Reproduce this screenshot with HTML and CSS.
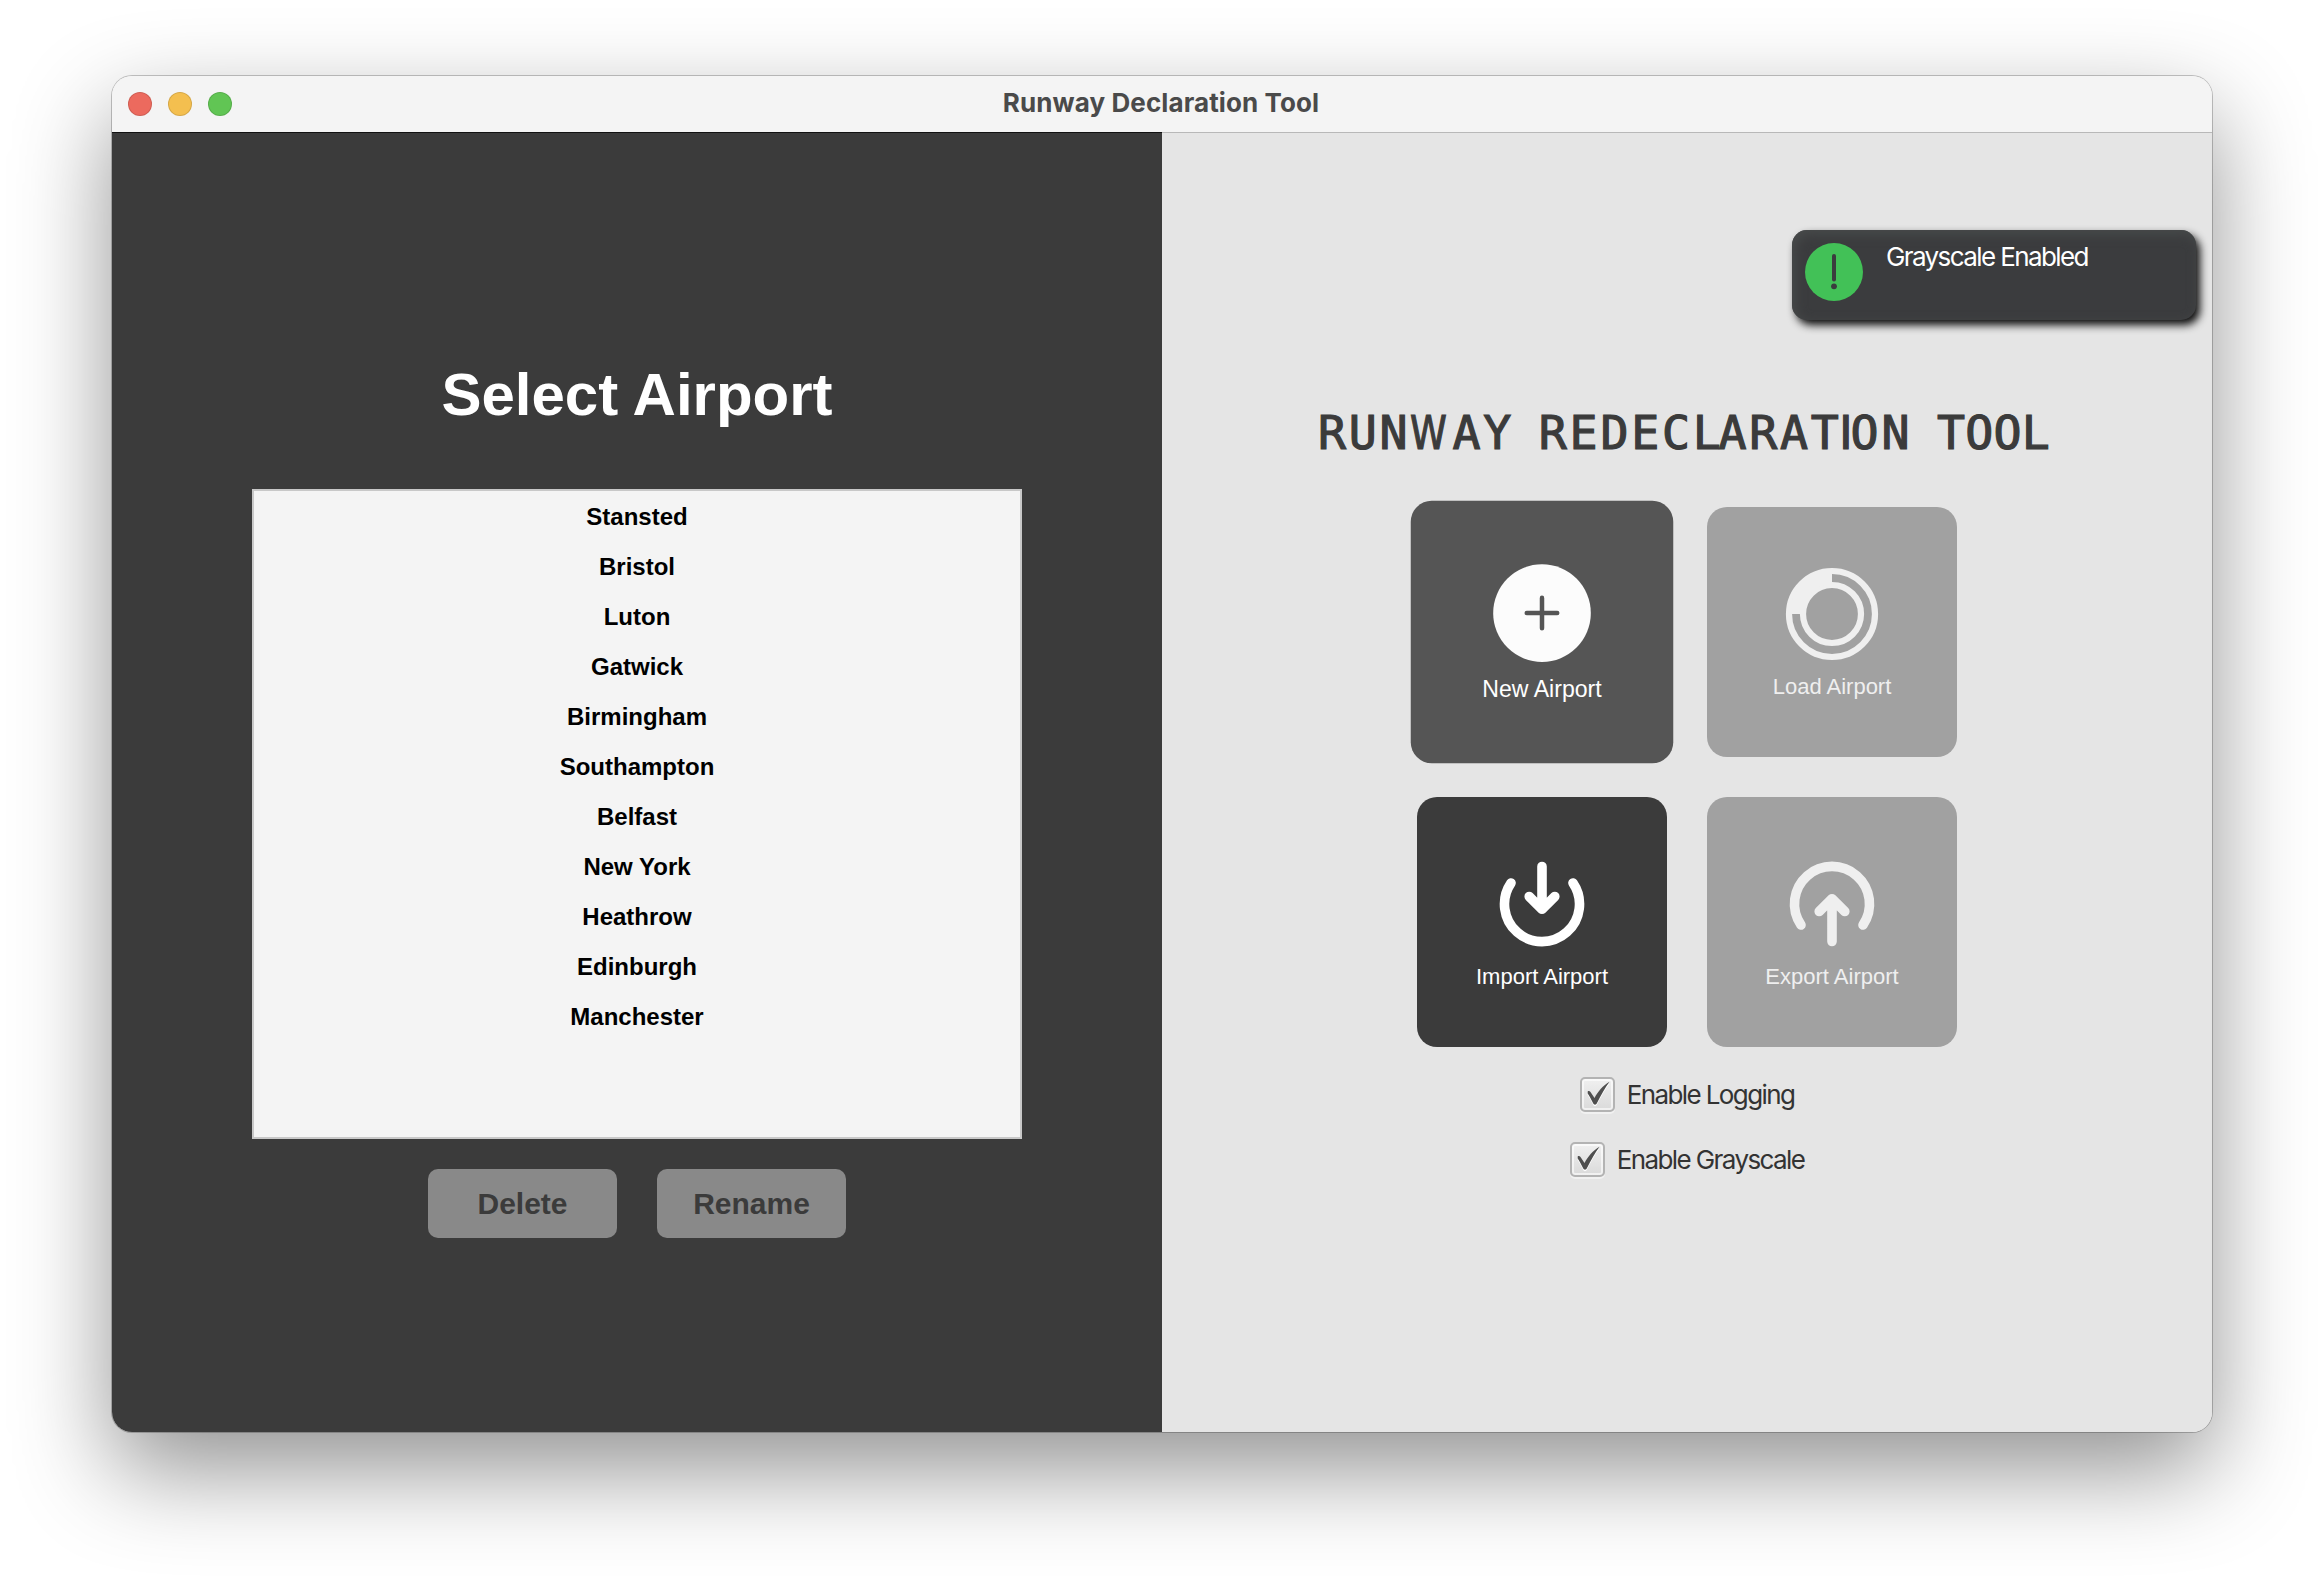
FILE: index.html
```html
<!DOCTYPE html>
<html lang="en">
<head>
<meta charset="utf-8">
<title>Runway Declaration Tool</title>
<link rel="stylesheet" href="styles.css">
</head>
<body>
<div class="window">
  <header class="titlebar">
    <div class="lights"><span class="light red"></span><span class="light yellow"></span><span class="light green"></span></div>
    <div class="window-title"><span>Runway Declaration Tool</span></div>
  </header>
  <main class="content">
    <section class="airports">
      <h1>Select Airport</h1>
      <ul class="list">
        <li>Stansted</li><li>Bristol</li><li>Luton</li><li>Gatwick</li><li>Birmingham</li><li>Southampton</li><li>Belfast</li><li>New York</li><li>Heathrow</li><li>Edinburgh</li><li>Manchester</li>
      </ul>
      <div class="actions"><button class="action" disabled>Delete</button><button class="action" disabled>Rename</button></div>
    </section>
    <section class="tools">
      <h2 class="brand">RUN<span class="w">W</span>AY REDEC<span class="l">L</span>ARAT<span class="i">I</span>ON <span class="t">TOO</span>L</h2>
      <div class="cards">
        <div class="card hover">
          <svg viewBox="0 0 100 100"><circle cx="50" cy="50" r="46.5" fill="#fcfcfc"/><path d="M50 35.5V64.5M35.500 50H64.500" stroke="#555" stroke-width="4.300" stroke-linecap="round"/></svg>
          <span>New Airport</span>
        </div>
        <div class="card off">
          <svg viewBox="0 0 100 100" fill="none" stroke="#efefef"><circle cx="50" cy="50" r="43" stroke-width="6.200"/><circle cx="50" cy="50" r="29" stroke-width="6.200"/><path d="M14 50A36 36 0 0 1 50 14" stroke-width="12"/></svg>
          <span>Load Airport</span>
        </div>
        <div class="card">
          <svg viewBox="0 0 100 100" fill="none" stroke="#fff" stroke-width="9.600" stroke-linecap="round" stroke-linejoin="round"><path d="M19 29A37.500 37.500 0 1 0 81 29M50 12.500V55M37.200 42.500L50 55.300L62.800 42.500"/></svg>
          <span>Import Airport</span>
        </div>
        <div class="card off">
          <svg viewBox="0 0 100 100" fill="none" stroke="#efefef" stroke-width="9.600" stroke-linecap="round" stroke-linejoin="round"><path d="M19 71A37.500 37.500 0 1 1 81 71M50 87.500V45M37.200 57.500L50 44.700L62.800 57.500"/></svg>
          <span>Export Airport</span>
        </div>
      </div>
      <div class="checks">
        <label class="check"><span class="box"><svg viewBox="0 0 35 35"><path d="M7.700 16.500V14.500C8.500 13.800 9.800 14 10.500 15L14.500 21C18 14.500 23 8.500 29.500 4.800C25 11 21 18 17 26C16 28.200 14 28.200 13 26C11 22 9.500 19 7.700 16.500Z" fill="#fff" transform="translate(0 1.500)"/><path d="M7.700 16.500V14.500C8.500 13.800 9.800 14 10.500 15L14.500 21C18 14.500 23 8.500 29.500 4.800C25 11 21 18 17 26C16 28.200 14 28.200 13 26C11 22 9.500 19 7.700 16.500Z" fill="#4f4f4f"/></svg></span><span class="label">Enable Logging</span></label>
        <label class="check"><span class="box"><svg viewBox="0 0 35 35"><path d="M7.700 16.500V14.500C8.500 13.800 9.800 14 10.500 15L14.500 21C18 14.500 23 8.500 29.500 4.800C25 11 21 18 17 26C16 28.200 14 28.200 13 26C11 22 9.500 19 7.700 16.500Z" fill="#fff" transform="translate(0 1.500)"/><path d="M7.700 16.500V14.500C8.500 13.800 9.800 14 10.500 15L14.500 21C18 14.500 23 8.500 29.500 4.800C25 11 21 18 17 26C16 28.200 14 28.200 13 26C11 22 9.500 19 7.700 16.500Z" fill="#4f4f4f"/></svg></span><span class="label">Enable Grayscale</span></label>
      </div>
      <div class="toast">
        <svg viewBox="0 0 58 58"><circle cx="29" cy="29" r="29" fill="#42c157"/><path d="M29 13V36.500" stroke="#3b3c3e" stroke-width="4" stroke-linecap="round"/><circle cx="29" cy="43.300" r="2.900" fill="#3b3c3e"/></svg>
        <span>Grayscale Enabled</span>
      </div>
    </section>
  </main>
</div>
</body>
</html>
```
FILE: styles.css
```css
* { box-sizing: border-box; }
body { margin: 0; height: 1580px; padding: 76px 112px; background: #fff; overflow: hidden; font-family: "Liberation Sans", Arial, sans-serif; }
.window { width: 2100px; height: 1356px; border-radius: 20px; overflow: hidden; background: #f4f4f4; box-shadow: 0 0 0 1px rgba(0,0,0,.22), 0 38px 96px rgba(0,0,0,.43); }
.titlebar { height: 56px; display: grid; grid-template-columns: 200px 1fr 200px; align-items: center; background: #f4f4f4; }
.lights { display: flex; gap: 16px; padding-left: 16px; }
.light { width: 24px; height: 24px; border-radius: 50%; border: 1px solid rgba(0,0,0,.12); }
.red { background: #ec6a5e; }
.yellow { background: #f4bf4f; }
.green { background: #61c554; }
.window-title { padding: 0 2px 2px 0; text-align: center; font: 700 26px/32px Inter, sans-serif; letter-spacing: .1px; color: #4a4a4a; }
.content { display: grid; grid-template-columns: 1050px 1050px; height: 1300px; }
.airports { display: flex; flex-direction: column; align-items: center; background: #3b3b3b; border-top: 1px solid #111; padding-top: 227px; }
h1 { margin: 0; height: 129px; font-size: 60px; line-height: 70px; color: #fff; }
.list { list-style: none; margin: 0; padding: 1px 0 0; width: 770px; height: 650px; background: #f4f4f4; border: 2px solid #c8c8c8; }
.list li { height: 50px; line-height: 50px; text-align: center; font-size: 24px; font-weight: 700; color: #000; }
.actions { display: flex; gap: 40px; margin-top: 30px; }
.action { width: 189px; height: 69px; padding: 1px 0 0; border: 0; border-radius: 10px; background: #898989; color: #3b3b3b; font: 700 30px/68px "Liberation Sans", Arial, sans-serif; }
.tools { position: relative; display: flex; flex-direction: column; align-items: center; background: #e5e5e5; border-top: 1px solid #b8b8b8; padding-top: 270px; }
.brand { margin: 0; width: 738px; height: 104px; white-space: nowrap; font: 400 46.600px/60px "DejaVu Sans Mono", monospace; letter-spacing: 2.750px; word-spacing: -6px; color: #3b3b3b; -webkit-text-stroke: 1.200px #3b3b3b; }
.brand .w { display: inline-block; width: 42px; letter-spacing: 0; font-family: "DejaVu Sans", sans-serif; transform: scaleX(.800); transform-origin: 0 50%; }
.brand .l { letter-spacing: -2.500px; }
.brand .i { display: inline-block; width: 9px; letter-spacing: 0; font-family: "DejaVu Sans", sans-serif; text-indent: -2.500px; }
.brand .t { letter-spacing: .200px; }
.cards { display: grid; grid-template-columns: 250px 250px; grid-auto-rows: 250px; gap: 40px; }
.card { display: flex; flex-direction: column; align-items: center; padding-top: 57px; border-radius: 20px; background: #3b3b3b; color: #fff; }
.card svg { width: 100px; height: 100px; }
.card span { margin-top: 9px; font-size: 22px; line-height: 28px; }
.card.hover { background: #555; transform: scale(1.050); }
.card.off { background: #a1a1a1; color: #efefef; }
.checks { display: flex; flex-direction: column; align-items: center; gap: 30px; margin-top: 30px; }
.check { display: flex; align-items: center; gap: 12px; height: 35px; color: #333; }
.box { width: 35px; height: 35px; border: 2px solid #b3b3b3; border-radius: 5px; background: linear-gradient(#f0f0f0, #dadada); box-shadow: inset 0 0 0 2px rgba(255,255,255,.6), 0 2px 0 #f1f1f1; }
.box svg { display: block; width: 35px; height: 35px; margin: -2px; }
.label, .toast span { font: 400 26px/34px Inter, sans-serif; letter-spacing: -1.600px; white-space: nowrap; }
.label { padding-top: 1px; }
.toast { position: absolute; left: 630px; top: 97px; width: 404px; height: 90px; display: flex; padding: 13px; gap: 23px; border-radius: 15px; color: #fff; background: #3b3c3e; box-shadow: 4px 5px 8px rgba(0,0,0,.95), inset 3px 4px 12px #484b4b; }
.toast svg { width: 58px; height: 58px; }
.toast span { margin-top: -3px; }
```
